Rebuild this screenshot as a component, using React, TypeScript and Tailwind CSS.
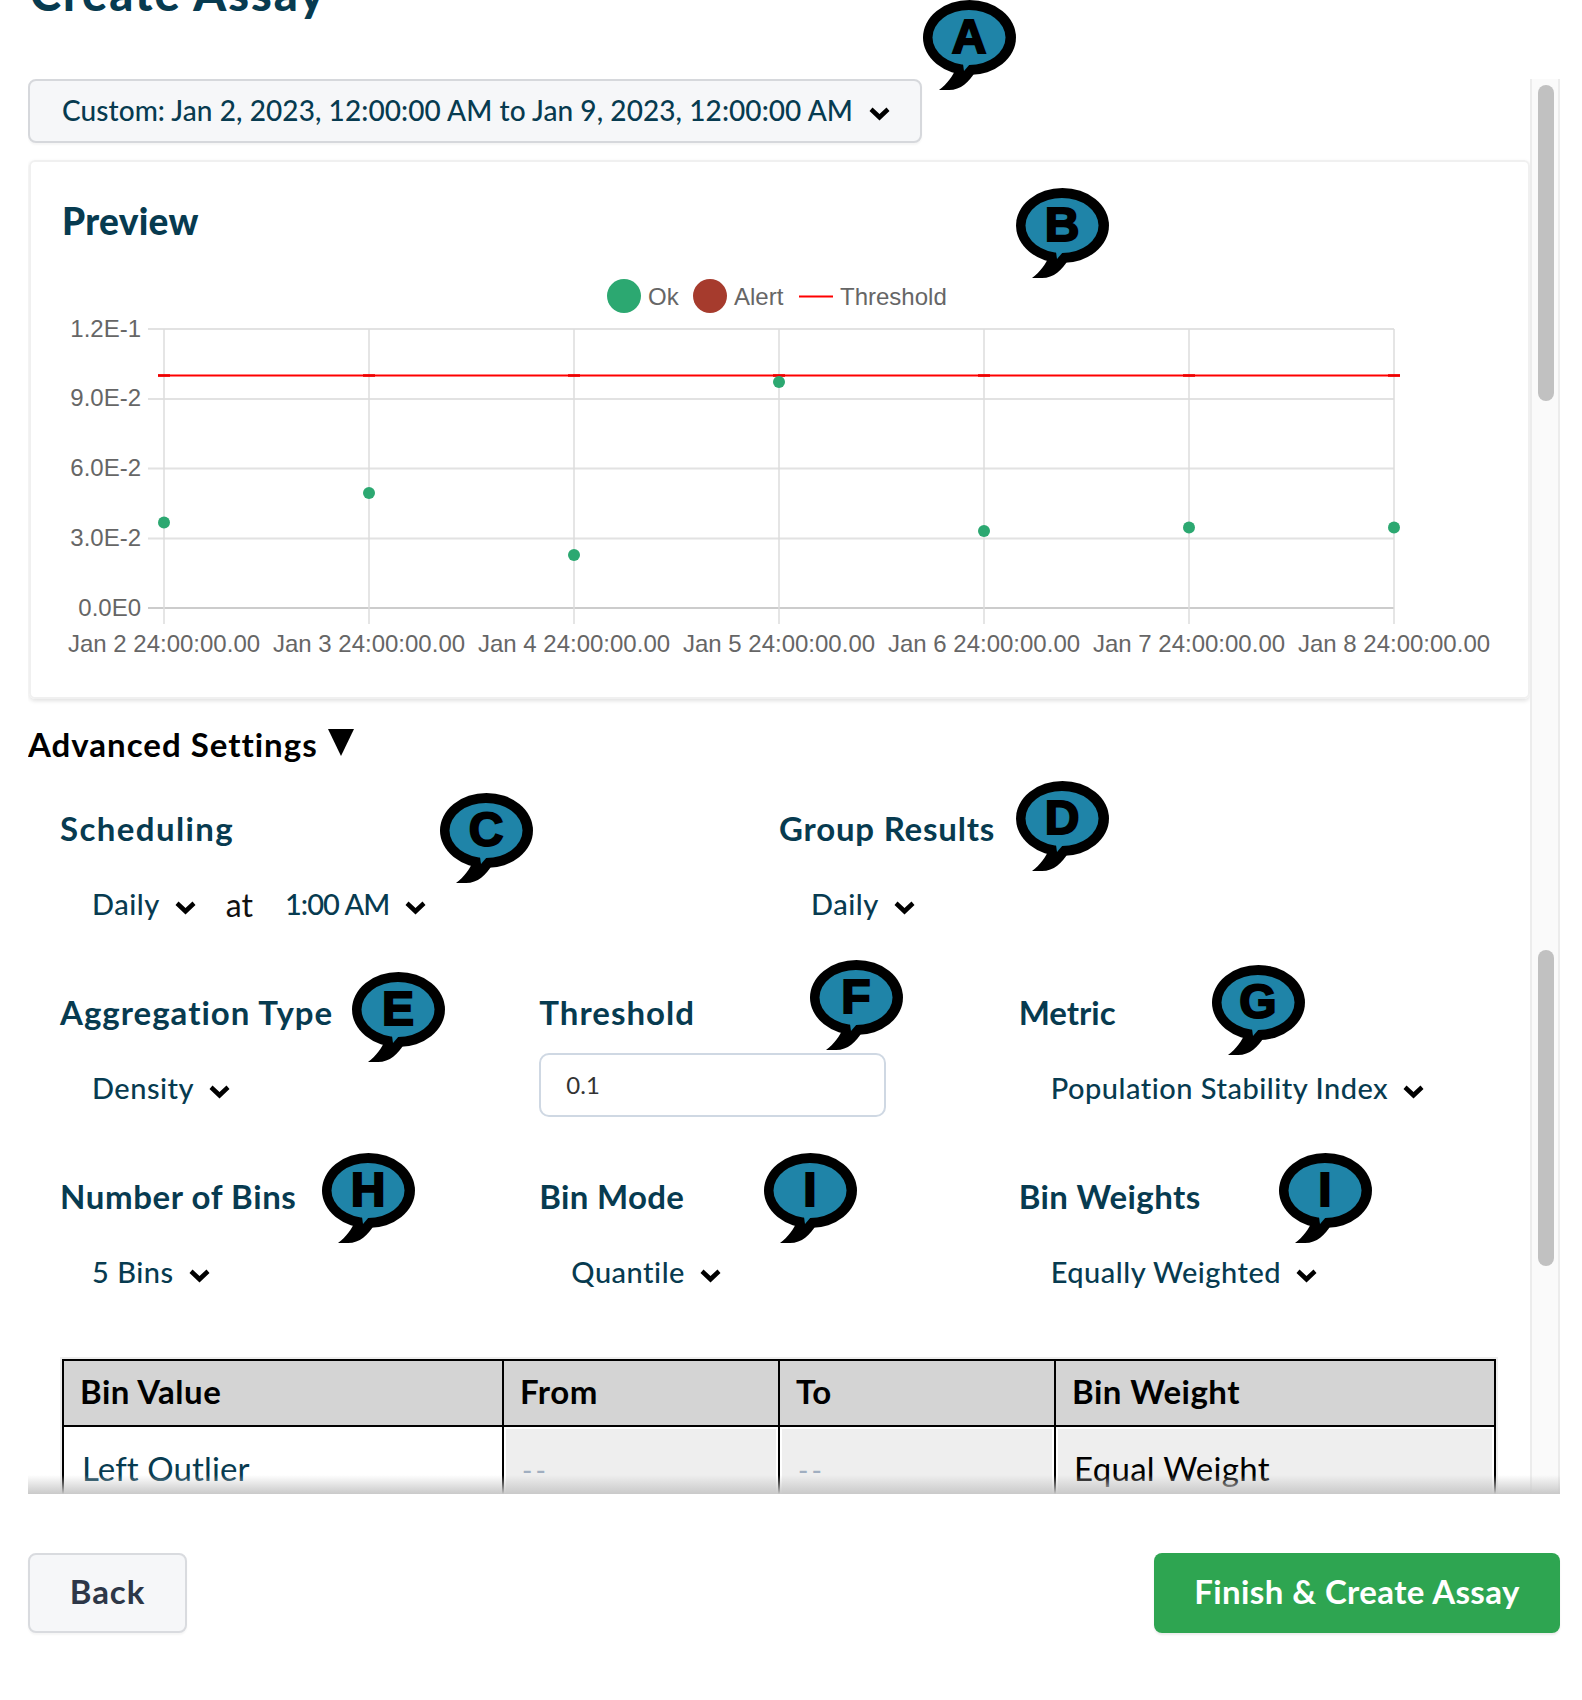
import React from "react";

const ink = "text-[#073b50]";

function Chevron() {
  return (
    <svg width="21" height="15" viewBox="0 0 21 15" className="shrink-0">
      <path d="M0.5 5 L3.5 1.5 L10.5 8 L17.5 1.5 L20.5 5 L10.5 14.5 Z" fill="#000" />
    </svg>
  );
}

function Badge({ l, x, y }: { l: string; x: number; y: number }) {
  return (
    <svg width="93" height="90" viewBox="0 0 93 90" className="absolute" style={{ left: x, top: y }}>
      <path d="M16 90 C24 84 30 76 33 68 L52 72 C46 82 38 90 26 90 Z" fill="#000" />
      <ellipse cx="46.5" cy="37.5" rx="46.5" ry="37.5" fill="#000" />
      <ellipse cx="46" cy="37.5" rx="36.5" ry="27.5" fill="#1f84a8" />
      <path d="M41 71 L47 64 L40 64 Z" fill="#1f84a8" />
      <text x="46" y="53" textAnchor="middle" fontFamily="'Liberation Sans', sans-serif" fontWeight="700" fontSize="48" stroke="#000" strokeWidth="2" fill="#000">
        {l}
      </text>
    </svg>
  );
}

function Label({ children, tr = "tracking-[0.7px]" }: { children: React.ReactNode; tr?: string }) {
  return <div className={`h-[44px] pb-[2px] flex items-center text-[33px] font-bold leading-none ${tr} ${ink}`}>{children}</div>;
}

function Select({ children, tight }: { children: React.ReactNode; tight?: boolean }) {
  return (
    <div className="flex items-center gap-[15px]">
      <span className={`text-[29px] font-medium leading-none pb-[2px] ${tight ? "tracking-[-0.9px]" : "tracking-[0.5px]"} ${ink}`}>{children}</span>
      <span className="pt-[6px]"><Chevron /></span>
    </div>
  );
}

function Field({ label, value, tr }: { label: string; value: string; tr?: string }) {
  return (
    <div className="flex flex-col gap-[18px]">
      <Label tr={tr}>{label}</Label>
      <div className="h-[63px] flex items-center pl-[32px] pt-[8px]">
        <Select>{value}</Select>
      </div>
    </div>
  );
}

const xs = [164, 369, 574, 779, 984, 1189, 1394];
const ys = [329, 399, 468.5, 538.5, 608];
const yLabels = ["1.2E-1", "9.0E-2", "6.0E-2", "3.0E-2", "0.0E0"];
const yOff = [8, 7, 7, 7, 8];
const pts: [number, number][] = [
  [164, 522.5],
  [369, 493],
  [574, 555],
  [779, 382],
  [984, 531],
  [1189, 527.5],
  [1394, 527.5],
];

function Chart() {
  const font = "'Liberation Sans', Arial, sans-serif";
  return (
    <svg width="1497" height="435" viewBox="31 262 1497 435" className="block" fontFamily={font} fontSize="24" fill="#666">
      <circle cx="624" cy="296" r="17" fill="#2ca871" />
      <text x="648" y="305">Ok</text>
      <circle cx="710" cy="296" r="17" fill="#a63b2d" />
      <text x="734" y="305">Alert</text>
      <line x1="799" x2="833" y1="296.5" y2="296.5" stroke="#f00" strokeWidth="2" />
      <text x="840" y="305">Threshold</text>
      {ys.map((y, i) => (
        <line key={y} x1="148" x2="1394" y1={y} y2={y} stroke={i === 4 ? "#ccc" : "#e2e2e2"} strokeWidth="2" />
      ))}
      {xs.map((x) => (
        <line key={x} x1={x} x2={x} y1="329" y2="624" stroke="#dcdcdc" strokeWidth="1.5" />
      ))}
      {ys.map((y, i) => (
        <text key={i} x="141" y={y + yOff[i]} textAnchor="end">{yLabels[i]}</text>
      ))}
      {xs.map((x, i) => (
        <text key={x} x={x} y="652" textAnchor="middle">{`Jan ${i + 2} 24:00:00.00`}</text>
      ))}
      <line x1="158" x2="1400" y1="375.5" y2="375.5" stroke="#f00" strokeWidth="2" />
      {xs.map((x) => (
        <line key={x} x1={x - 6} x2={x + 6} y1="375.5" y2="375.5" stroke="#e00" strokeWidth="2.6" />
      ))}
      {pts.map(([x, y]) => (
        <circle key={x} cx={x} cy={y} r="6" fill="#2ca871" />
      ))}
    </svg>
  );
}

export default function App() {
  return (
    <div className="relative w-[1582px] h-[1700px] overflow-hidden bg-white font-['Lato','Open_Sans',sans-serif]">
      <div className="h-[79px] overflow-hidden flex items-start pl-[30px]">
        <h1 className={`mt-[-32px] text-[47px] leading-[50px] font-black tracking-[2px] whitespace-nowrap ${ink}`}>Create Assay</h1>
      </div>

      <div className="relative ml-[28px] w-[1532px] h-[1415px] flex overflow-hidden">
        <div className="w-[1502px] shrink-0">
          <div className="w-[894px] h-[64px] rounded-[8px] border-2 border-[#d6d8dc] bg-[#f6f7f9] flex items-center pl-[32px] gap-[16px] shadow-[0_2px_2px_rgba(0,0,0,0.04)]">
            <span className={`text-[28px] font-medium leading-none tracking-[0.08px] whitespace-nowrap pb-[3px] ${ink}`}>
              Custom: Jan 2, 2023, 12:00:00 AM to Jan 9, 2023, 12:00:00 AM
            </span>
            <span className="pt-[4px]"><Chevron /></span>
          </div>

          <div className="mt-[17px] ml-[1px] w-[1501px] h-[539px] rounded-[6px] border-2 border-[#f0f0f0] shadow-[0_2px_4px_rgba(0,0,0,0.12)]">
            <h2 className={`pt-[32px] pl-[31px] h-[100px] text-[37px] leading-[54px] font-black tracking-[0.3px] ${ink}`}>Preview</h2>
            <Chart />
          </div>

          <div className="mt-[24px] h-[44px] flex items-center gap-[10px]">
            <span className="text-[33px] font-bold leading-none tracking-[1px] text-black pb-[2px]">Advanced Settings</span>
            <svg width="26" height="27" viewBox="0 0 26 27" className="mt-[-6px]"><path d="M0 0H26L13 27Z" fill="#000" /></svg>
          </div>

          <div className="ml-[32px] w-[1438px]">
            <div className="mt-[40px] grid grid-cols-2">
              <div className="flex flex-col gap-[18px]">
                <Label tr="tracking-[1.4px]">Scheduling</Label>
                <div className="h-[63px] flex items-center pl-[32px] pt-[8px]">
                  <Select>Daily</Select>
                  <span className="ml-[30px] text-[32px] leading-none text-[#111]">at</span>
                  <span className="ml-[32px]"><Select tight>1:00 AM</Select></span>
                </div>
              </div>
              <Field label="Group Results" value="Daily" tr="tracking-[0.8px]" />
            </div>

            <div className="mt-[59px] grid grid-cols-3">
              <Field label="Aggregation Type" value="Density" tr="tracking-[1px]" />
              <div className="flex flex-col gap-[18px]">
                <Label tr="tracking-[1px]">Threshold</Label>
                <div className="w-[347px] h-[64px] rounded-[10px] border-2 border-[#cfd8e3] flex items-center pl-[25px] text-[24px] text-[#333]">0.1</div>
              </div>
              <Field label="Metric" value="Population Stability Index" tr="tracking-[0px]" />
            </div>

            <div className="mt-[58px] grid grid-cols-3">
              <Field label="Number of Bins" value="5 Bins" tr="tracking-[0.6px]" />
              <Field label="Bin Mode" value="Quantile" tr="tracking-[0.3px]" />
              <Field label="Bin Weights" value="Equally Weighted" tr="tracking-[0.4px]" />
            </div>
          </div>

          <table className="mt-[59px] ml-[34px] w-[1432px] table-fixed border-collapse shadow-[0_0_0_2px_#eeeeee]">
            <colgroup>
              <col className="w-[440px]" />
              <col className="w-[276px]" />
              <col className="w-[276px]" />
              <col className="w-[440px]" />
            </colgroup>
            <thead>
              <tr className="h-[66px] bg-[#d4d4d4]">
                {["Bin Value", "From", "To", "Bin Weight"].map((h) => (
                  <th key={h} className="border-2 border-black pl-[16px] pb-[3px] text-left text-[33px] font-bold leading-none tracking-[0.5px] text-black">{h}</th>
                ))}
              </tr>
            </thead>
            <tbody>
              <tr className="h-[90px]">
                <td className={`border-2 border-black pl-[18px] pb-[5px] align-middle text-[33px] font-normal tracking-[0.1px] ${ink}`}>Left Outlier</td>
                <td className="border-2 border-black bg-[#eeeeee] pl-[18px] pb-[2px] align-middle text-[28px] tracking-[3px] text-[#a0aec0] shadow-[inset_0_0_0_2px_#fff]">--</td>
                <td className="border-2 border-black bg-[#eeeeee] pl-[18px] pb-[2px] align-middle text-[28px] tracking-[3px] text-[#a0aec0] shadow-[inset_0_0_0_2px_#fff]">--</td>
                <td className="border-2 border-black bg-[#eeeeee] pl-[18px] pb-[5px] align-middle text-[33px] font-normal tracking-[0.3px] text-black shadow-[inset_0_0_0_2px_#fff]">Equal Weight</td>
              </tr>
            </tbody>
          </table>
        </div>

        <div className="w-[30px] shrink-0 bg-[#fafafa] border-x-2 border-[#ececec] pl-[6px] pt-[6px]">
          <div className="w-[16px] h-[316px] rounded-full bg-[#c1c1c1]" />
          <div className="mt-[549px] w-[16px] h-[316px] rounded-full bg-[#c1c1c1]" />
        </div>

        <div className="absolute left-0 right-0 bottom-0 h-[19px] bg-gradient-to-b from-transparent to-[#c9c9c9]" />
      </div>

      <div className="mx-[28px] w-[1532px] mt-[59px] flex justify-between">
        <button className="w-[159px] h-[80px] rounded-[8px] border-2 border-[#d9dbdf] bg-[#f6f7f9] text-[33px] font-bold tracking-[0.9px] pb-[2px] text-[#2d3748] shadow-[0_2px_2px_rgba(0,0,0,0.04)]">Back</button>
        <button className="w-[406px] h-[80px] rounded-[8px] bg-[#2ea551] text-[33px] font-bold tracking-[0.4px] pb-[2px] text-white shadow-[0_2px_2px_rgba(0,0,0,0.08)]">Finish &amp; Create Assay</button>
      </div>

      <Badge l="A" x={923} y={0} />
      <Badge l="B" x={1016} y={188} />
      <Badge l="C" x={440} y={793} />
      <Badge l="D" x={1016} y={781} />
      <Badge l="E" x={352} y={972} />
      <Badge l="F" x={810} y={960} />
      <Badge l="G" x={1212} y={965} />
      <Badge l="H" x={322} y={1153} />
      <Badge l="I" x={764} y={1153} />
      <Badge l="I" x={1279} y={1153} />
    </div>
  );
}
